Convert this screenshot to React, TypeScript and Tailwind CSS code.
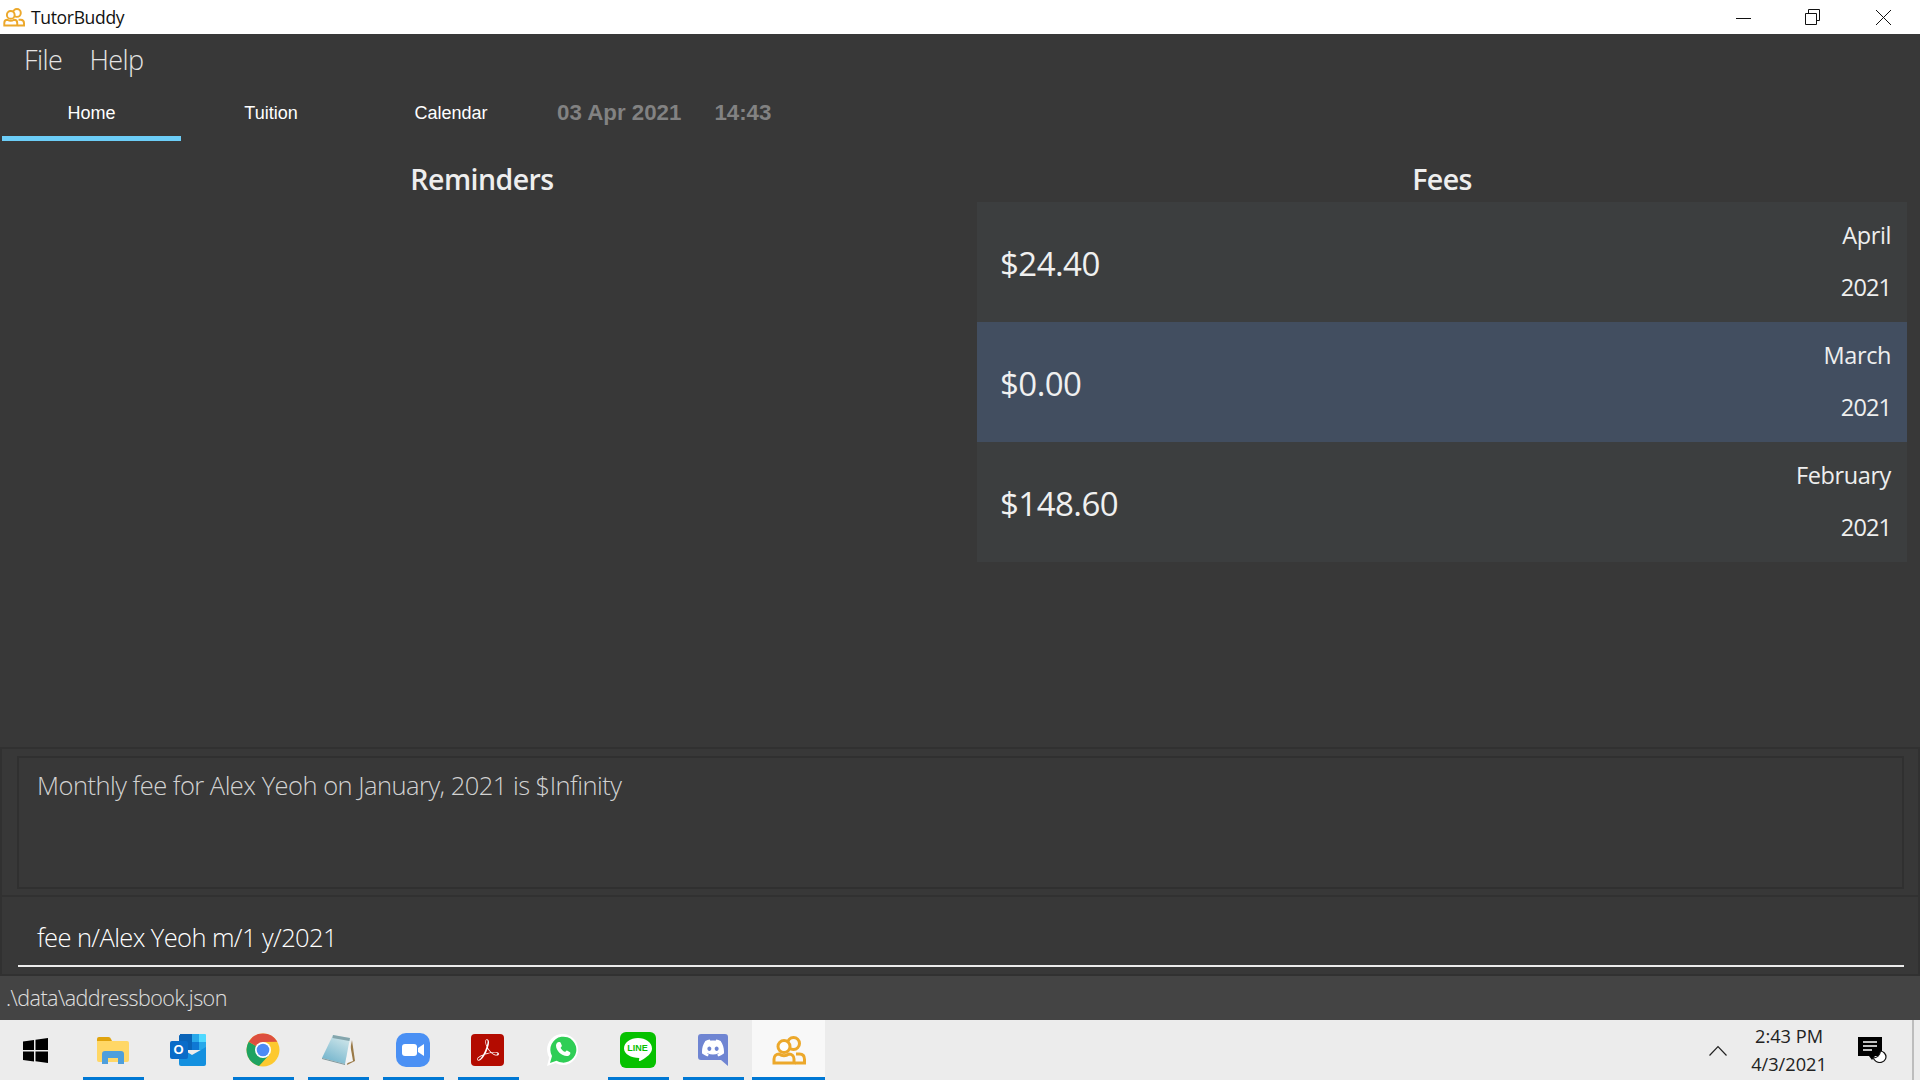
import React from "react";
import { SiAdobeacrobatreader, SiDiscord } from "react-icons/si";

const segoe = "font-['Open_Sans','Noto_Sans',sans-serif]";

function TutorIcon({ w, h, stroke = 3 }: { w: number; h: number; stroke?: number }) {
  return (
    <svg width={w} height={h} viewBox="0 0 34 29" fill="none" stroke="#eca82b" strokeWidth={stroke}>
      <circle cx="21.500" cy="7.500" r="6" />
      <path d="M24 18h3.500c3.500 0 5 2.500 5 5.500v3.500H23" />
      <circle cx="12" cy="10.500" r="6" fill="#fdfdfd" />
      <path d="M2 27v-4c0-3.200 2.300-5 5-5 1.700 1.200 3.200 1.700 5 1.700s3.300-.5 5-1.700c2.700 0 5 1.800 5 5v4z" />
    </svg>
  );
}

function TaskItem({ w, open, active, children }: { w: string; open?: boolean; active?: boolean; children: React.ReactNode }) {
  return (
    <div className={`${w} h-full flex items-center justify-center relative ${active ? "bg-[#f8f8f8]" : "pr-[2px]"}`}>
      {children}
      {open && <div className="absolute bottom-0 left-0 right-0 h-[3px] bg-[#0078d4]" />}
    </div>
  );
}

function FeeRow({ amount, month, selected }: { amount: string; month: string; selected?: boolean }) {
  return (
    <div className={`h-[120px] flex items-center justify-between pl-[23px] pr-[16px] ${selected ? "bg-[#424e60]" : "bg-[#3c3e3f]"}`}>
      <div className="text-[33px] font-medium text-[#f0f0f0] tracking-[-0.55px] mt-[4px]">{amount}</div>
      <div className="flex flex-col items-end h-full pt-[16px] gap-[18px] text-[#eeeeee] text-[23.500px] font-medium leading-[34px] tracking-[-0.4px]">
        <div>{month}</div>
        <div className="tracking-[-0.9px]">2021</div>
      </div>
    </div>
  );
}

export default function App() {
  return (
    <div className={`w-[1920px] h-[1080px] flex flex-col overflow-hidden ${segoe}`}>
      <div className="h-[34px] bg-white flex items-center shrink-0">
        <div className="ml-[3px]"><TutorIcon w={22} h={19} stroke={3} /></div>
        <div className="ml-[6px] text-[17.500px] text-[#111] tracking-[-0.33px]">TutorBuddy</div>
        <div className="ml-auto flex items-center h-full">
          <svg width="15" height="15" viewBox="0 0 15 15" className="mr-[54px]" fill="none" stroke="#111" strokeWidth="1"><path d="M0 8.500h15" /></svg>
          <svg width="15" height="16" viewBox="0 0 15 16" className="mr-[56px]" fill="none" stroke="#111" strokeWidth="1"><path d="M.5 4.500h11v11H.5zM3.500 4.500v-4h11v11h-3" /></svg>
          <svg width="15" height="15" viewBox="0 0 15 15" className="mr-[29px]" fill="none" stroke="#111" strokeWidth="1"><path d="M0 0l15 15M15 0L0 15" /></svg>
        </div>
      </div>

      <div className="flex-1 min-h-0 bg-[#383838] flex flex-col">
        <div className="h-[52px] flex items-center pl-[24px] gap-[27px] text-[27px] font-light text-[#e4e4e4] shrink-0 tracking-[-0.55px]">
          <span>File</span>
          <span>Help</span>
        </div>

        <div className="h-[55px] flex shrink-0 font-['Liberation_Sans',sans-serif] pl-[2px]">
          <div className="w-[179px] h-full flex items-center justify-center text-white text-[18px] border-b-[5px] border-[#6ccdf7] pt-[5px]">Home</div>
          <div className="w-[180px] h-full flex items-center justify-center text-white text-[18px] border-b-[5px] border-transparent pt-[5px]">Tuition</div>
          <div className="w-[180px] h-full flex items-center justify-center text-white text-[18px] border-b-[5px] border-transparent pt-[5px]">Calendar</div>
          <div className="h-full flex items-center text-[22.300px] font-bold text-[#828282] pb-[1px] ml-[16px] gap-[33px]">
            <span>03 Apr 2021</span>
            <span>14:43</span>
          </div>
        </div>

        <div className="flex-1 min-h-0 flex">
          <div className="w-[977px] pr-[13px]">
            <div className="h-[61px] flex items-center justify-center pt-[15px] text-[28.500px] font-semibold text-[#eeeeee] tracking-[-0.55px]">Reminders</div>
          </div>
          <div className="w-[930px]">
            <div className="h-[61px] flex items-center justify-center pt-[15px] text-[28.500px] font-semibold text-[#eeeeee] tracking-[-0.55px]">Fees</div>
            <FeeRow amount="$24.40" month="April" />
            <FeeRow amount="$0.00" month="March" selected />
            <FeeRow amount="$148.60" month="February" />
          </div>
        </div>

        <div className="h-[150px] shrink-0 border-y-2 border-[#313131] border-r-2 border-l-2 pt-[7px] pl-[15px] pr-[14px]">
          <div className="h-[133px] border-2 border-[#303030] pl-[18px] pt-[10px] text-[25.500px] font-light text-[#d2d2d2] tracking-[-0.52px] leading-[34px]">
            Monthly fee for Alex Yeoh on January, 2021 is $Infinity
          </div>
        </div>

        <div className="h-[79px] shrink-0 border-x-2 border-b-2 border-[#313131] pt-[23px] pl-[16px] pr-[14px]">
          <div className="h-[47px] border-b-2 border-[#ececec] pl-[19px] text-[25.500px] font-light text-white tracking-[-0.6px] leading-[34px]">
            fee n/Alex Yeoh m/1 y/2021
          </div>
        </div>

        <div className="h-[44px] bg-[#444444] flex items-center pl-[6px] pt-[1px] text-[21.500px] font-light text-[#e0e0e0] tracking-[-0.55px] shrink-0">
          .\data\addressbook.json
        </div>
      </div>

      <div className="h-[60px] bg-[#ececec] flex items-center shrink-0">
        <TaskItem w="w-[72px]">
          <svg width="25" height="25" viewBox="0 0 25 25" fill="#000"><path d="M0 3.500l11-1.500v10H0zM12.500 1.700L25 0v12H12.500zM0 13.500h11v10L0 22zM12.500 13.500H25V25l-12.500-1.800z" /></svg>
        </TaskItem>
        <div className="w-[11px]" />
        <TaskItem w="w-[61px]" open>
          <svg width="32" height="27" viewBox="0 0 32 27">
            <path d="M0 2a2 2 0 012-2h9a3 3 0 013 2l1 2H0z" fill="#e0a30d" />
            <path d="M0 4h30a2 2 0 012 2v17a2 2 0 01-2 2H2a2 2 0 01-2-2z" fill="#ffd766" />
            <path d="M5 27v-10a3 3 0 013-3h16a3 3 0 013 3v10h-6v-6H11v6z" fill="#4e9fdc" />
          </svg>
        </TaskItem>
        <div className="w-[14px]" />
        <TaskItem w="w-[61px]">
          <div className="relative w-[36px] h-[33px]">
            <svg className="absolute left-[8px] top-0" width="28" height="33" viewBox="0 0 28 33">
              <path d="M2 0h23a2 2 0 012 2v14H1V2a1 1 0 011-1z" fill="#0a64b8" />
              <path d="M14 0h13v8H14z" fill="#28a8ea" />
              <path d="M14 8h7v8h-7z" fill="#0f78d4" />
              <path d="M21 0h6a1 1 0 011 1v7h-7z" fill="#50d9ff" />
              <path d="M21 8h7v8h-7z" fill="#28a8ea" />
              <path d="M1 13l13 8 14-8v17a2 2 0 01-2 2H3a2 2 0 01-2-2z" fill="#1490df" />
            </svg>
            <div className="absolute left-0 top-[7px] w-[18px] h-[18px] rounded-[2px] bg-[#0a6cc8] text-white text-[13px] font-bold flex items-center justify-center font-['Liberation_Sans',sans-serif]">O</div>
          </div>
        </TaskItem>
        <div className="w-[14px]" />
        <TaskItem w="w-[61px]" open>
          <svg width="34" height="34" viewBox="0 0 34 34">
            <circle cx="17" cy="17" r="16.500" fill="#fdc92f" />
            <path d="M2.700 8.750A16.500 16.500 0 0013 33L24 21 10 13z" fill="#1ea362" />
            <path d="M2.700 8.750A16.500 16.500 0 0131.300 8.750L17 9l-7 4z" fill="#dd4f3f" />
            <circle cx="17" cy="17" r="8" fill="#fff" />
            <circle cx="17" cy="17" r="6.300" fill="#4c8bf5" />
          </svg>
        </TaskItem>
        <div className="w-[14px]" />
        <TaskItem w="w-[61px]" open>
          <svg width="34" height="32" viewBox="0 0 34 32">
            <defs>
              <linearGradient id="note" x1="0.700" y1="0" x2="0.200" y2="1">
                <stop offset="0" stopColor="#cfe6ea" />
                <stop offset="1" stopColor="#6fb2cb" />
              </linearGradient>
            </defs>
            <path d="M31 6l3 21-8 4z" fill="#9a7a48" />
            <path d="M28 4l4 23-8 3z" fill="#f4f4f4" />
            <path d="M12 1l17 3-5 26L1 24z" fill="url(#note)" />
            <path d="M12 1l17 3-.6 3-17-3z" fill="#84a5ac" />
            <path d="M1 24l23 6v1L1 25z" fill="#7f979b" />
          </svg>
        </TaskItem>
        <div className="w-[14px]" />
        <TaskItem w="w-[61px]" open>
          <div className="w-[34px] h-[34px] rounded-[10px] bg-[#4a90f4] flex items-center justify-center">
            <svg width="22" height="14" viewBox="0 0 22 14" fill="#fff"><rect x="0" y="1" width="15" height="12" rx="3" /><path d="M16 5l6-4v12l-6-4z" /></svg>
          </div>
        </TaskItem>
        <div className="w-[14px]" />
        <TaskItem w="w-[61px]" open>
          <div className="w-[33px] h-[32px] rounded-[4px] bg-[#b30b00] flex items-center justify-center">
            <SiAdobeacrobatreader className="text-white" size={22} />
          </div>
        </TaskItem>
        <div className="w-[14px]" />
        <TaskItem w="w-[61px]">
          <div className="relative w-[32px] h-[32px]">
            <svg className="absolute inset-0" width="32" height="32" viewBox="0 0 32 32"><path d="M0 32l2.300-8.500A15.500 15.500 0 1116 31a15 15 0 01-7.500-2z" fill="#fff" /><path d="M3 29l2-7a13 13 0 114.500 4.700z" fill="#2fce56" /></svg>
            <svg className="absolute left-[8px] top-[7px]" width="17" height="17" viewBox="0 0 17 17"><path d="M4 1c1 0 1.500.3 1.800 1l1 2.400c.1.500 0 1-.8 1.900-.3.300-.4.500-.2.900.9 1.600 2.200 2.800 3.900 3.600.4.200.6.100.9-.2.600-.8 1-1.200 1.400-1l2.600 1.300c.6.300.8.500.8 1 0 2-1.900 3.100-3.600 3.100C6.500 15 1 9.500 1 4.500 1 2.600 2.500 1 4 1z" fill="#fff" /></svg>
          </div>
        </TaskItem>
        <div className="w-[14px]" />
        <TaskItem w="w-[61px]" open>
          <div className="w-[36px] h-[36px] rounded-[6px] bg-[#06c100] relative flex items-center justify-center">
            <svg className="absolute" width="28" height="28" viewBox="0 0 28 28"><path d="M14 2c7.500 0 14 4.600 14 10.500 0 4.500-4.500 8.500-11 12-1.500.8-2.500 1-2 -.5l.3-2C7 22 0 18 0 12.500 0 6.600 6.500 2 14 2z" fill="#fff" /></svg>
            <span className="relative text-[#06c100] text-[9px] font-bold font-['Liberation_Sans',sans-serif] mb-[3px]">LINE</span>
          </div>
        </TaskItem>
        <div className="w-[14px]" />
        <TaskItem w="w-[61px]" open>
          <div className="relative">
            <svg width="30" height="32" viewBox="0 0 30 32"><path d="M3 0h24a3 3 0 013 3v29l-7-6H3a3 3 0 01-3-3V3a3 3 0 013-3z" fill="#6f85d2" /></svg>
            <SiDiscord className="absolute left-[4px] top-[3px] text-white" size={22} />
          </div>
        </TaskItem>
        <div className="w-[8px]" />
        <TaskItem w="w-[73px]" open active>
          <TutorIcon w={34} h={29} />
        </TaskItem>

        <div className="ml-auto flex items-center h-full">
          <svg width="18" height="11" viewBox="0 0 18 11" fill="none" stroke="#222" strokeWidth="1.200" className="mr-[24px]"><path d="M.5 10.500L9 1.500l8.500 9" /></svg>
          <div className="flex flex-col items-center text-[18.200px] leading-[28px] text-[#222] w-[76px]">
            <span>2:43 PM</span>
            <span>4/3/2021</span>
          </div>
          <svg width="29" height="26" viewBox="0 0 29 26" className="ml-[31px] mr-[-5px]">
            <path d="M0 0h24v19h-7l-3 4-3-4H0z" fill="#000" />
            <path d="M5 5h14M5 9h14M5 13h9" stroke="#fff" strokeWidth="1.300" />
            <path d="M15 21c4 0 7-3 7.500-7 3 .3 5.500 3 5.500 6 0 3-3 5.500-6 5.500-3 0-5.500-2-7-4.500z" fill="#fff" stroke="#111" strokeWidth="1.200" />
          </svg>
          <div className="ml-[30px] mr-[6px] w-[2px] h-full bg-[#bdbdbd]" />
        </div>
      </div>
    </div>
  );
}
